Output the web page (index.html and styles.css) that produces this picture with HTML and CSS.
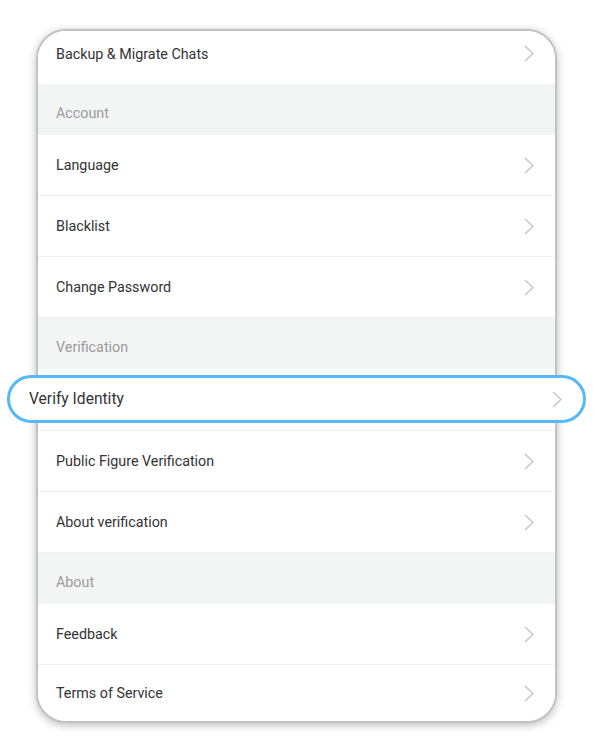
FILE: index.html
```html
<!DOCTYPE html>
<html lang="en">
<head>
  <meta charset="UTF-8">
  <title>Settings</title>
  <link rel="stylesheet" href="styles.css">
</head>
<body>

  <div class="card">
    <!-- general -->
    <div class="row first">
      <span>Backup &amp; Migrate Chats</span>
      <svg class="chev" viewBox="0 0 10 17"><polyline points="1,1 9,8.5 1,16"/></svg>
    </div>

    <!-- account -->
    <div class="group">Account</div>
    <div class="row">
      <span>Language</span>
      <svg class="chev" viewBox="0 0 10 17"><polyline points="1,1 9,8.5 1,16"/></svg>
    </div>
    <div class="row">
      <span>Blacklist</span>
      <svg class="chev" viewBox="0 0 10 17"><polyline points="1,1 9,8.5 1,16"/></svg>
    </div>
    <div class="row">
      <span>Change Password</span>
      <svg class="chev" viewBox="0 0 10 17"><polyline points="1,1 9,8.5 1,16"/></svg>
    </div>

    <!-- verification -->
    <div class="group">Verification</div>
    <div class="slot">
      <div class="row focus">
        <span>Verify Identity</span>
        <svg class="chev" viewBox="0 0 10 17"><polyline points="1,1 9,8.5 1,16"/></svg>
      </div>
    </div>
    <div class="row">
      <span>Public Figure Verification</span>
      <svg class="chev" viewBox="0 0 10 17"><polyline points="1,1 9,8.5 1,16"/></svg>
    </div>
    <div class="row">
      <span>About verification</span>
      <svg class="chev" viewBox="0 0 10 17"><polyline points="1,1 9,8.5 1,16"/></svg>
    </div>

    <!-- about -->
    <div class="group">About</div>
    <div class="row">
      <span>Feedback</span>
      <svg class="chev" viewBox="0 0 10 17"><polyline points="1,1 9,8.5 1,16"/></svg>
    </div>
    <div class="row last">
      <span>Terms of Service</span>
      <svg class="chev" viewBox="0 0 10 17"><polyline points="1,1 9,8.5 1,16"/></svg>
    </div>
  </div>

</body>
</html>
```

FILE: styles.css
```css
body {
  margin: 0;
  padding: 29px 36px;
  background: #fff;
  font-family: Roboto, "Liberation Sans", sans-serif;
}
.card {
  background: #fff;
  border: 2px solid #c2c2c2;
  border-radius: 30px;
  box-shadow: 0 2px 9px rgba(0,0,0,0.28);
}
.row {
  display: flex;
  align-items: center;
  justify-content: space-between;
  height: 60px;
  padding: 0 21px 0 18px;
  border-bottom: 1px solid #f1f1f1;
  font-size: 14.3px;
  color: #333;
  background: #fff;
}
.row.first {
  height: 45px;
  padding-bottom: 8px;
  border-radius: 28px 28px 0 0;
  border-bottom: none;
}
.row.last {
  height: 56px;
  border-bottom: none;
  border-radius: 0 0 28px 28px;
}
.group {
  display: flex;
  align-items: center;
  height: 44px;
  padding: 7px 18px 0;
  background: #f3f4f4;
  font-size: 14.3px;
  color: #9b9b9b;
}
.slot {
  height: 62px;
  border-bottom: 1px solid #f1f1f1;
  padding-top: 6px;
  box-sizing: border-box;
}
.row.focus {
  height: 42px;
  margin: 0 -31px;
  padding: 0 21px 0 19px;
  border: 3px solid #55b9f6;
  border-radius: 25px;
  font-size: 15.6px;
}
.chev {
  width: 10px;
  height: 17px;
  fill: none;
  stroke: #c3c3c3;
  stroke-width: 1.3;
}
```
